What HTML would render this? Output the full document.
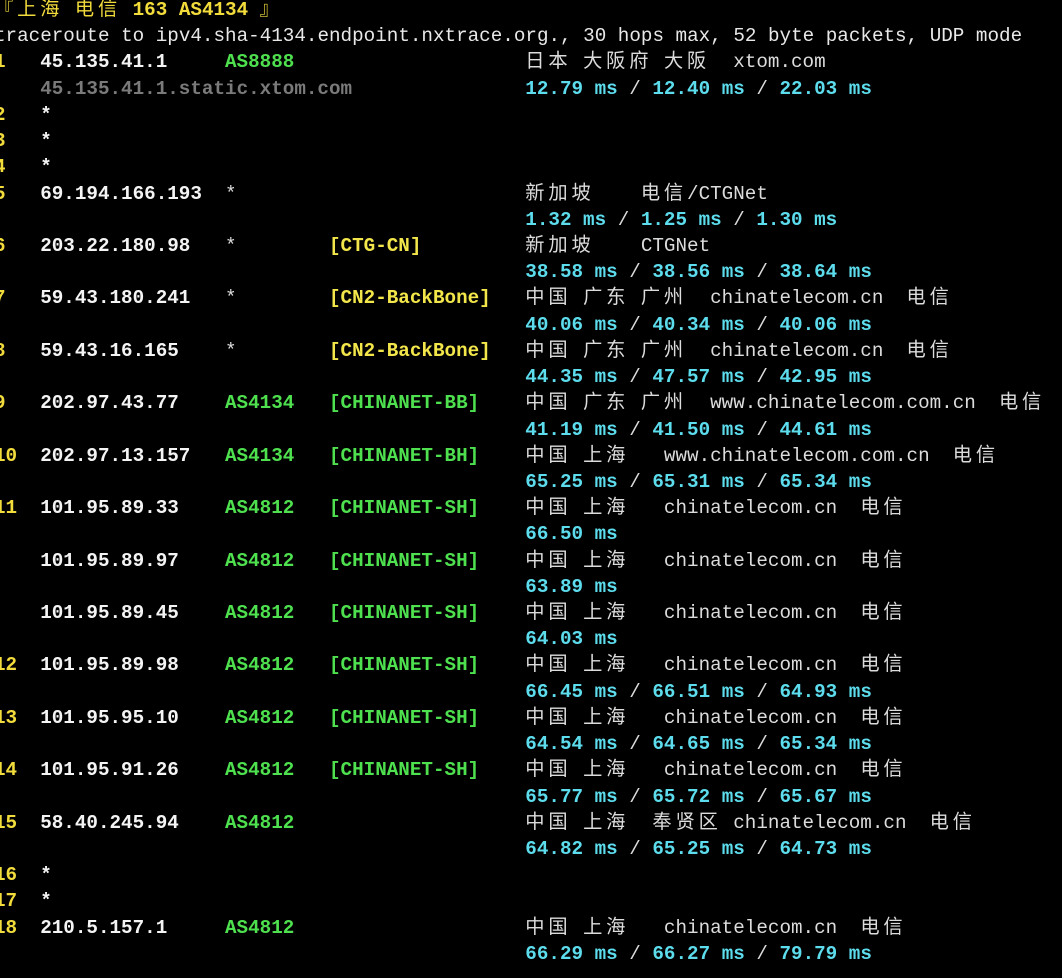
<!DOCTYPE html>
<html><head><meta charset="utf-8">
<style>
html,body{margin:0;padding:0;background:#000;width:1062px;height:978px;overflow:hidden}
#t{position:absolute;left:-6px;top:-3px;font-family:"Liberation Mono","Noto Sans CJK SC",monospace;font-size:19.25px;}
.r{position:relative;height:26.22px;line-height:26.22px;white-space:pre}
.r span{position:absolute;top:0;white-space:pre}
i{font-style:normal;letter-spacing:3.85px;font-family:"Noto Sans CJK SC",sans-serif;font-weight:400;line-height:1;vertical-align:baseline}
.y{color:#f2dc3c;font-weight:bold}
.w{color:#f4f4f4;font-weight:bold}
.g{color:#4ee04e;font-weight:bold}
.tg{color:#f2e64a;font-weight:bold}
.n{color:#dcdcdc}
.c{color:#5cdcec;font-weight:bold}
.h{color:#7a7a7a;font-weight:bold}
.k0{left:0}.k4{left:46.2px}.k20{left:231px}.k29{left:335px}.k46{left:531.3px}
.tx{color:#e8e8e8}
.gr{color:#4ee04e;font-weight:bold}
b{font-weight:inherit}
.s{color:#dcdcdc;font-weight:normal}
</style></head><body>
<div id="t">
<div class="r"><span class="k0 y"><i>『上海</i> <i>电信</i> 163 AS4134 <i>』</i></span></div>
<div class="r"><span class="k0 tx">traceroute to ipv4.sha-4134.endpoint.nxtrace.org., 30 hops max, 52 byte packets, UDP mode</span></div>
<div class="r"><span class="k0 y">1</span><span class="k4 w">45.135.41.1</span><span class="k20 g">AS8888</span><span class="k46 n"><i>日本</i> <i>大阪府</i> <i>大阪</i>  xtom.com</span></div>
<div class="r"><span class="k4 h">45.135.41.1.static.xtom.com</span><span class="k46 c">12.79 ms <b class="s">/</b> 12.40 ms <b class="s">/</b> 22.03 ms</span></div>
<div class="r"><span class="k0 y">2</span><span class="k4 w">*</span></div>
<div class="r"><span class="k0 y">3</span><span class="k4 w">*</span></div>
<div class="r"><span class="k0 y">4</span><span class="k4 w">*</span></div>
<div class="r"><span class="k0 y">5</span><span class="k4 w">69.194.166.193</span><span class="k20 n">*</span><span class="k46 n"><i>新加坡</i>    <i>电信</i>/CTGNet</span></div>
<div class="r"><span class="k46 c">1.32 ms <b class="s">/</b> 1.25 ms <b class="s">/</b> 1.30 ms</span></div>
<div class="r"><span class="k0 y">6</span><span class="k4 w">203.22.180.98</span><span class="k20 n">*</span><span class="k29 tg">[CTG-CN]</span><span class="k46 n"><i>新加坡</i>    CTGNet</span></div>
<div class="r"><span class="k46 c">38.58 ms <b class="s">/</b> 38.56 ms <b class="s">/</b> 38.64 ms</span></div>
<div class="r"><span class="k0 y">7</span><span class="k4 w">59.43.180.241</span><span class="k20 n">*</span><span class="k29 tg">[CN2-BackBone]</span><span class="k46 n"><i>中国</i> <i>广东</i> <i>广州</i>  chinatelecom.cn  <i>电信</i></span></div>
<div class="r"><span class="k46 c">40.06 ms <b class="s">/</b> 40.34 ms <b class="s">/</b> 40.06 ms</span></div>
<div class="r"><span class="k0 y">8</span><span class="k4 w">59.43.16.165</span><span class="k20 n">*</span><span class="k29 tg">[CN2-BackBone]</span><span class="k46 n"><i>中国</i> <i>广东</i> <i>广州</i>  chinatelecom.cn  <i>电信</i></span></div>
<div class="r"><span class="k46 c">44.35 ms <b class="s">/</b> 47.57 ms <b class="s">/</b> 42.95 ms</span></div>
<div class="r"><span class="k0 y">9</span><span class="k4 w">202.97.43.77</span><span class="k20 g">AS4134</span><span class="k29 gr">[CHINANET-BB]</span><span class="k46 n"><i>中国</i> <i>广东</i> <i>广州</i>  www.chinatelecom.com.cn  <i>电信</i></span></div>
<div class="r"><span class="k46 c">41.19 ms <b class="s">/</b> 41.50 ms <b class="s">/</b> 44.61 ms</span></div>
<div class="r"><span class="k0 y">10</span><span class="k4 w">202.97.13.157</span><span class="k20 g">AS4134</span><span class="k29 gr">[CHINANET-BH]</span><span class="k46 n"><i>中国</i> <i>上海</i>   www.chinatelecom.com.cn  <i>电信</i></span></div>
<div class="r"><span class="k46 c">65.25 ms <b class="s">/</b> 65.31 ms <b class="s">/</b> 65.34 ms</span></div>
<div class="r"><span class="k0 y">11</span><span class="k4 w">101.95.89.33</span><span class="k20 g">AS4812</span><span class="k29 gr">[CHINANET-SH]</span><span class="k46 n"><i>中国</i> <i>上海</i>   chinatelecom.cn  <i>电信</i></span></div>
<div class="r"><span class="k46 c">66.50 ms</span></div>
<div class="r"><span class="k4 w">101.95.89.97</span><span class="k20 g">AS4812</span><span class="k29 gr">[CHINANET-SH]</span><span class="k46 n"><i>中国</i> <i>上海</i>   chinatelecom.cn  <i>电信</i></span></div>
<div class="r"><span class="k46 c">63.89 ms</span></div>
<div class="r"><span class="k4 w">101.95.89.45</span><span class="k20 g">AS4812</span><span class="k29 gr">[CHINANET-SH]</span><span class="k46 n"><i>中国</i> <i>上海</i>   chinatelecom.cn  <i>电信</i></span></div>
<div class="r"><span class="k46 c">64.03 ms</span></div>
<div class="r"><span class="k0 y">12</span><span class="k4 w">101.95.89.98</span><span class="k20 g">AS4812</span><span class="k29 gr">[CHINANET-SH]</span><span class="k46 n"><i>中国</i> <i>上海</i>   chinatelecom.cn  <i>电信</i></span></div>
<div class="r"><span class="k46 c">66.45 ms <b class="s">/</b> 66.51 ms <b class="s">/</b> 64.93 ms</span></div>
<div class="r"><span class="k0 y">13</span><span class="k4 w">101.95.95.10</span><span class="k20 g">AS4812</span><span class="k29 gr">[CHINANET-SH]</span><span class="k46 n"><i>中国</i> <i>上海</i>   chinatelecom.cn  <i>电信</i></span></div>
<div class="r"><span class="k46 c">64.54 ms <b class="s">/</b> 64.65 ms <b class="s">/</b> 65.34 ms</span></div>
<div class="r"><span class="k0 y">14</span><span class="k4 w">101.95.91.26</span><span class="k20 g">AS4812</span><span class="k29 gr">[CHINANET-SH]</span><span class="k46 n"><i>中国</i> <i>上海</i>   chinatelecom.cn  <i>电信</i></span></div>
<div class="r"><span class="k46 c">65.77 ms <b class="s">/</b> 65.72 ms <b class="s">/</b> 65.67 ms</span></div>
<div class="r"><span class="k0 y">15</span><span class="k4 w">58.40.245.94</span><span class="k20 g">AS4812</span><span class="k46 n"><i>中国</i> <i>上海</i>  <i>奉贤区</i> chinatelecom.cn  <i>电信</i></span></div>
<div class="r"><span class="k46 c">64.82 ms <b class="s">/</b> 65.25 ms <b class="s">/</b> 64.73 ms</span></div>
<div class="r"><span class="k0 y">16</span><span class="k4 w">*</span></div>
<div class="r"><span class="k0 y">17</span><span class="k4 w">*</span></div>
<div class="r"><span class="k0 y">18</span><span class="k4 w">210.5.157.1</span><span class="k20 g">AS4812</span><span class="k46 n"><i>中国</i> <i>上海</i>   chinatelecom.cn  <i>电信</i></span></div>
<div class="r"><span class="k46 c">66.29 ms <b class="s">/</b> 66.27 ms <b class="s">/</b> 79.79 ms</span></div>
</div>
</body></html>
